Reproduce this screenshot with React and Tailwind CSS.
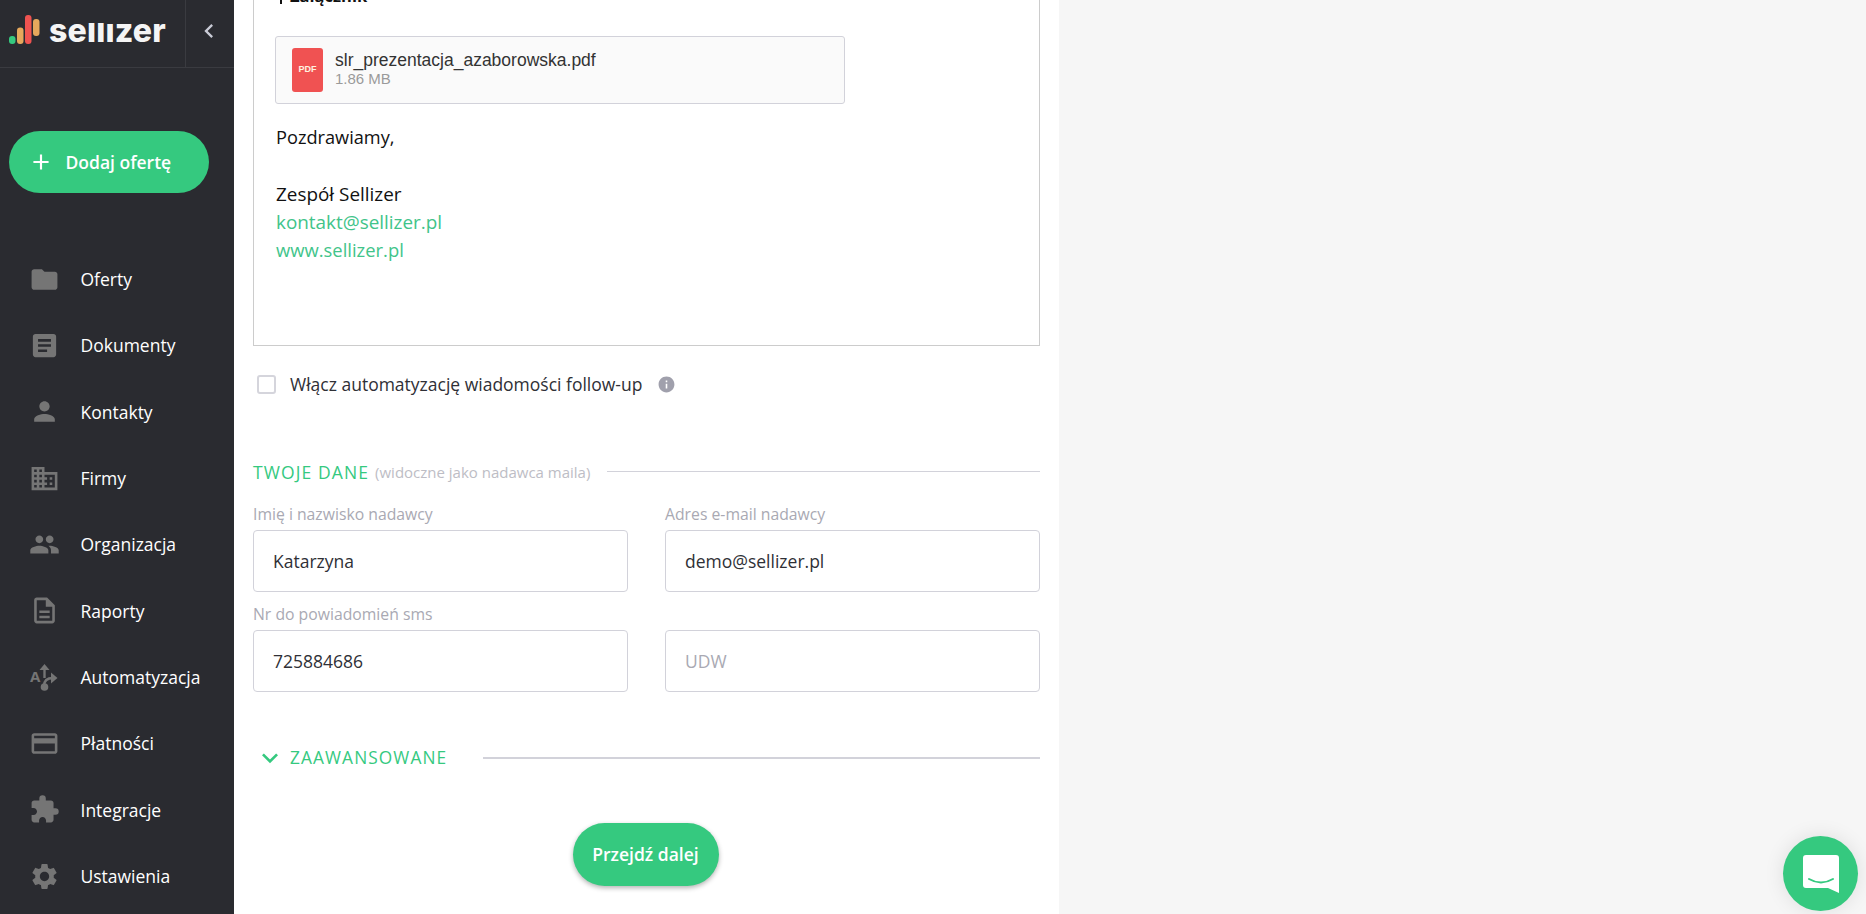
import {
  MdFolder,
  MdArticle,
  MdPerson,
  MdBusiness,
  MdPeople,
  MdOutlineDescription,
  MdCreditCard,
  MdExtension,
  MdSettings,
  MdInfo,
  MdAdd,
  MdChevronLeft,
  MdKeyboardArrowDown,
} from "react-icons/md";

function AutomationIcon({ size = 31 }) {
  return (
    <svg width={size} height={size} viewBox="0 0 31 31" fill="#757575">
      <text x="1" y="20" fontSize="15" fontWeight="700" fontFamily="Open Sans, sans-serif">
        A
      </text>
      <circle cx="15.5" cy="25" r="3.8" />
      <path d="M15 24c0-5 3-8 9-8" fill="none" stroke="#757575" strokeWidth="2.4" />
      <path d="M22 10.5l6.5 5.5-6.5 5.5z" />
      <path d="M15.5 16V6" fill="none" stroke="#757575" strokeWidth="2.4" />
      <path d="M10.5 8L15.5 2l5 6z" />
    </svg>
  );
}

const navItems = [
  { label: "Oferty", icon: MdFolder },
  { label: "Dokumenty", icon: MdArticle },
  { label: "Kontakty", icon: MdPerson },
  { label: "Firmy", icon: MdBusiness },
  { label: "Organizacja", icon: MdPeople },
  { label: "Raporty", icon: MdOutlineDescription },
  { label: "Automatyzacja", icon: AutomationIcon },
  { label: "Płatności", icon: MdCreditCard },
  { label: "Integracje", icon: MdExtension },
  { label: "Ustawienia", icon: MdSettings },
];

function Logo() {
  return (
    <div className="flex items-start pl-[9px]">
      <svg width="32" height="32" viewBox="0 0 32 32" className="mt-[14px] shrink-0">
        <rect x="0" y="22" width="6.5" height="8" rx="3" fill="#35c97f" />
        <rect x="8" y="13.5" width="6.5" height="16.5" rx="3" fill="#e6a85c" />
        <rect x="16" y="1" width="6.5" height="29" rx="3" fill="#ef5350" />
        <rect x="24" y="5" width="6.5" height="17" rx="3" fill="#e6a85c" />
      </svg>
      <div className="ml-[8px] mt-[23px] h-[19px] overflow-hidden">
        <div className="-mt-[12px] font-['Inter',sans-serif] text-[32px] leading-[40px] font-extrabold tracking-[0.2px] text-[#f5f5f5]">
          sellızer
        </div>
      </div>
    </div>
  );
}

function Sidebar() {
  return (
    <aside className="flex h-full w-[234px] shrink-0 flex-col bg-[#2a2b30]">
      <div className="flex h-[68px] shrink-0 border-b border-[#3a3b40]">
        <div className="w-[186px] border-r border-[#3a3b40]">
          <Logo />
        </div>
        <div className="flex flex-1 items-center justify-center pb-[5px] pr-[2px]">
          <MdChevronLeft size={28} className="text-[#c9cbd6]" />
        </div>
      </div>
      <button className="ml-[9px] mt-[63px] flex h-[62px] w-[200px] shrink-0 items-center rounded-full bg-[#35c97f] pl-[19px] text-left text-[17.5px] font-semibold text-white">
        <MdAdd size={26} className="mr-[11.5px]" />
        Dodaj ofertę
      </button>
      <nav className="mt-[53px] flex flex-col">
        {navItems.map((item) => (
          <a key={item.label} className="flex h-[66.33px] items-center pl-[29px] text-[17.5px] text-white">
            <span className="flex w-[31px] justify-center">
              <item.icon size={31} color="#757575" />
            </span>
            <span className="ml-[20.5px]">{item.label}</span>
          </a>
        ))}
      </nav>
    </aside>
  );
}

function Attachment() {
  return (
    <div className="ml-[21px] flex h-[68px] w-[570px] items-center rounded-[3px] border border-[#d2d2da] bg-[#fafafa] pl-[16px]">
      <div className="flex h-[44px] w-[31px] items-center justify-center rounded-[3px] bg-[#f05252] font-['Liberation_Sans',sans-serif] text-[9px] font-bold text-[#fff3e0]">
        PDF
      </div>
      <div className="ml-[12px] -mt-[2px] font-['Liberation_Sans',sans-serif]">
        <div className="text-[17.5px] leading-[20px] text-[#333333]">slr_prezentacja_azaborowska.pdf</div>
        <div className="text-[15px] leading-[18px] text-[#9a9a9a]">1.86 MB</div>
      </div>
    </div>
  );
}

function Field({ label, value, placeholder }) {
  return (
    <div className="w-[375px]">
      <div className="h-[32px] text-[15.75px] leading-[32px] text-[#a9a9b3]">{label}</div>
      <div
        className={`flex h-[62px] items-center rounded-[4px] border border-[#d2d2da] pl-[19px] text-[17.5px] ${
          value ? "text-[#2f3036]" : "text-[#a9a9b3]"
        }`}
      >
        {value || placeholder}
      </div>
    </div>
  );
}

function MainPanel() {
  return (
    <main className="h-full w-[825px] shrink-0 overflow-hidden bg-white pl-[19px] pr-[19px]">
      <div className="-mt-[16px] h-[362px] border-x border-b border-[#cccccc]">
        <div className="ml-[26px] flex h-[28px] items-start text-[16.5px] leading-[24px] font-bold text-[#111111]">
          <span className="mr-[8px] mt-[12px] h-[8px] w-[2px] bg-[#111111]" />
          Załącznik
        </div>
        <div className="h-[24px]" />
        <Attachment />
        <div className="ml-[22px] mt-[19px] text-[18.9px] leading-[28px] text-[#111111]">
          <div className="h-[29px] text-[18.2px]">Pozdrawiamy,</div>
          <div className="h-[28px]" />
          <div>Zespół Sellizer</div>
          <div className="text-[#41c48a]">kontakt@sellizer.pl</div>
          <div className="text-[18.4px] text-[#41c48a]">www.sellizer.pl</div>
        </div>
      </div>

      <div className="ml-[4px] mt-[28px] flex h-[20px] items-center text-[17.5px] text-[#2f3036]">
        <span className="h-[19px] w-[19px] rounded-[3px] border-2 border-[#d5d5dc]" />
        <span className="ml-[14px]">Włącz automatyzację wiadomości follow-up</span>
        <MdInfo size={19} className="ml-[15px] text-[#a0a0ac]" />
      </div>

      <div className="mt-[68px] flex h-[20px] items-center">
        <span className="text-[17.5px] tracking-[1.1px] text-[#35c97f]">TWOJE DANE</span>
        <span className="ml-[6px] text-[15px] text-[#bdbdc5]">(widoczne jako nadawca maila)</span>
        <span className="ml-[17px] -mt-px h-px flex-1 bg-[#d2d2da]" />
      </div>

      <div className="mt-[16px] flex justify-between">
        <Field label="Imię i nazwisko nadawcy" value="Katarzyna" />
        <Field label="Adres e-mail nadawcy" value="demo@sellizer.pl" />
      </div>
      <div className="mt-[6px] flex justify-between">
        <Field label="Nr do powiadomień sms" value="725884686" />
        <Field label="" placeholder="UDW" />
      </div>

      <div className="mt-[56px] flex h-[20px] items-center">
        <MdKeyboardArrowDown size={32} className="ml-[1px] -mr-[3px] text-[#35c97f]" />
        <span className="ml-[7px] text-[17.3px] tracking-[1.1px] text-[#35c97f]">ZAAWANSOWANE</span>
        <span className="ml-[36px] h-[2px] flex-1 bg-[#d2d2da]" />
      </div>

      <div className="mt-[55px] flex justify-center pr-[2px]">
        <button className="h-[63px] w-[146px] rounded-full bg-[#35c97f] text-[17.5px] font-semibold text-white shadow-[0_2px_5px_rgba(0,0,0,0.3)]">
          Przejdź dalej
        </button>
      </div>
    </main>
  );
}

export default function App() {
  return (
    <div className="relative flex h-screen overflow-hidden bg-[#f6f6f6] font-['Open_Sans',sans-serif]">
      <Sidebar />
      <MainPanel />
      <button className="absolute left-[1783px] top-[836px] flex h-[75px] w-[75px] items-center justify-center rounded-full bg-[#35c97f] shadow-[0_0_20px_rgba(0,0,0,0.1)]">
        <svg width="36" height="40" viewBox="0 0 36 40">
          <path d="M3 1h30a3 3 0 0 1 3 3v35l-11-5H3a3 3 0 0 1-3-3V4a3 3 0 0 1 3-3z" fill="#ffffff" />
          <path d="M6 25q12 7 24 0" fill="none" stroke="#35c97f" strokeWidth="2" strokeLinecap="round" />
        </svg>
      </button>
    </div>
  );
}
